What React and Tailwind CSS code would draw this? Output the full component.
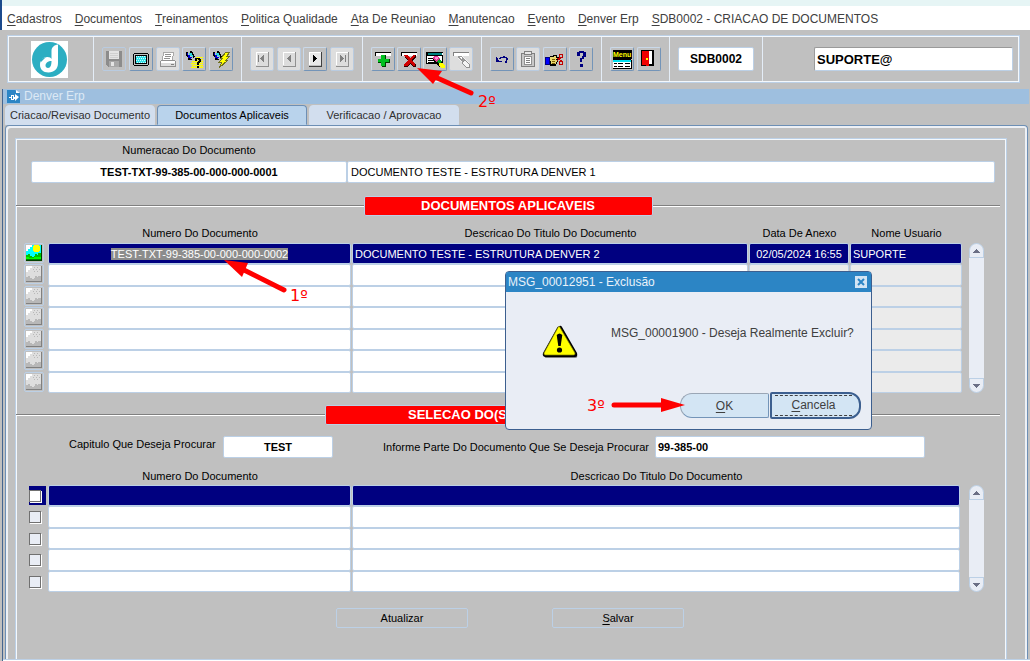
import { useEffect, useRef, useState } from "react";
import clsx from "clsx";

const menus = [
  "Cadastros",
  "Documentos",
  "Treinamentos",
  "Politica Qualidade",
  "Ata De Reuniao",
  "Manutencao",
  "Evento",
  "Denver Erp",
  "SDB0002 - CRIACAO DE DOCUMENTOS",
];

const tabs = [
  "Criacao/Revisao Documento",
  "Documentos Aplicaveis",
  "Verificacao / Aprovacao",
];

const documents = [
  {
    number: "TEST-TXT-99-385-00-000-000-0002",
    title: "DOCUMENTO TESTE - ESTRUTURA DENVER 2",
    date: "02/05/2024 16:55",
    user: "SUPORTE",
  },
  {},
  {},
  {},
  {},
  {},
  {},
];

const searchRows = [1, 2, 3, 4, 5];

function Svg({ children, size = 22 }) {
  return (
    <svg
      width={size}
      height={size}
      viewBox={`0 0 ${size} ${size}`}
      shapeRendering="crispEdges"
      className="shrink-0"
      aria-hidden="true">
      {children}
    </svg>
  );
}

function SaveIcon() {
  return (
    <Svg>
      <path d="M3 3h16v16H5l-2-2z" fill="#8c8c8c" />
      <path d="M6 3h10v8H6z" fill="#e4e4e4" />
      <path d="M7 5h8M7 7h8M7 9h8" stroke="#d0d0d0" />
      <path d="M6 13h10v6H6z" fill="#a8a8a8" />
      <path d="M8 14h3v4H8z" fill="#e4e4e4" />
    </Svg>
  );
}

function ScreenIcon() {
  return (
    <Svg>
      <path d="M4 5h14v1h1v11h-1v1H4v-1H3V6h1z" fill="#000" />
      <path d="M4 6h14v11H4z" fill="#c0c0c0" />
      <path d="M5 7h12v9H5z" fill="#000" />
      <path d="M6 8h10v7H6z" fill="#30e0e8" />
      <path
        d="M6 8.500h10M7 10.500h9M6 12.500h10M7 14.500h9"
        stroke="#d0ffff"
        strokeDasharray="1 1"
      />
    </Svg>
  );
}

function PrintIcon() {
  return (
    <Svg>
      <path d="M7 4h10l-2 8H5z" fill="#fff" stroke="#a8a8a8" />
      <path d="M8 6.500h6M8 8.500h6M7 10.500h6" stroke="#909090" />
      <path d="M4 12h14l1 2v5H3v-5z" fill="#909090" />
      <path d="M4 13h14v2H4z" fill="#fff" />
      <path d="M4 15h14v3H4z" fill="#dcdcdc" />
      <path d="M14 16h3v1h-3z" fill="#808080" />
    </Svg>
  );
}

// the small torch shared by the query buttons
function Torch() {
  return (
    <>
      <path d="M3 5h2v2h2v2h2v1H8v1H6v-1H5V8H4V7H3z" fill="#0000d0" />
      <path d="M6 5h4v2h1v2H9V8H7V7H6z" fill="#30d8e0" />
      <path d="M3 4h2v1H4v2h1v2H4V8H3zM5 10h2v1h2v1H5z" fill="#000" />
      <path d="M7 3h2v1h1v2h1v2h1v1h-1v1h-1V7H9V5H7z" fill="#000" />
    </>
  );
}

function QueryIcon() {
  return (
    <Svg>
      <path
        d="M13 9.500h7M12 11.500h8M9 13.500h11M8 15.500h12M9 17.500h11M8 19.500h12"
        stroke="#ffff00"
        strokeWidth="1"
      />
      <path
        d="M9 14.500h11M8 16.500h12M9 18.500h11M13 12.500h7"
        stroke="#e8e860"
        strokeDasharray="1 1"
      />
      <Torch />
      <path
        d="M12 10h5v1h1v3h-1v1h-1v2h-2v-3h1v-1h1v-1h-1v-1h-1v2h-2v-2h-1zM14 18h2v2h-2z"
        fill="#000"
      />
    </Svg>
  );
}

function ExecuteIcon() {
  return (
    <Svg>
      <Torch />
      <path
        d="M16 4h4l-3 4h3l-4 4h2l-9 8 3-6h-3l4-4h-2z"
        fill="#ffff00"
        stroke="#707020"
      />
    </Svg>
  );
}

function StepIcon({ dir, bar, dark }) {
  const color = dark ? "#000" : "#808080";
  return (
    <Svg>
      <path d="M5 4h12v13H5z" fill={dark ? "#e8e8e8" : "#dcdcdc"} />
      <path d="M17 4v14H5" fill="none" stroke={dark ? "#404040" : "#909090"} />
      <path d="M5.500 17V4.500H17" fill="none" stroke="#fff" />
      <g transform={dir === "left" ? "translate(22 0) scale(-1 1)" : undefined}>
        <path
          d="M9 7h1v1h1v1h1v1h1v1h-1v1h-1v1h-1v1H9z"
          fill={color}
        />
        {bar && <path d="M14 7h1v7h-1z" fill={color} />}
      </g>
    </Svg>
  );
}

function Bar({ muted }) {
  return (
    <>
      <path d="M3 4h16v4H3z" fill={muted ? "#808080" : "#000"} />
      <path d="M4 5h15v3H4z" fill="#fff" />
    </>
  );
}

function InsertIcon() {
  return (
    <Svg>
      <Bar />
      <path d="M10 7h4v4h4v4h-4v4h-4v-4H6v-4h4z" fill="#004000" />
      <path d="M9 7h4v4h4v3h-4v4H9v-4H6v-3h3z" fill="#00c020" />
    </Svg>
  );
}

function RemoveIcon() {
  return (
    <Svg>
      <Bar />
      <path
        d="M7 7h3l2 3 3-3h3v2l-4 4 4 4v2h-3l-3-3-3 3H6v-2l4-4-3-3z"
        fill="#300000"
      />
      <path
        d="M6 7h3l3 3 3-3h2v1l-4 4 4 4v2h-2l-3-3-3 3H6v-1l4-5-4-4z"
        fill="#d00000"
      />
    </Svg>
  );
}

function ClearIcon() {
  return (
    <Svg>
      <path d="M2 4h17v12H2z" fill="#000" />
      <path d="M4 5h15v2H4zM3 8h15v7H3z" fill="#fff" />
      <path d="M4 5h14v2H4z" fill="#008080" />
      <path d="M4 10.500h6M4 12.500h6M4 14.500h8" stroke="#000" />
      <path d="M9 9h4l6 6v4h-3l-7-6z" fill="#000" />
      <path d="M10 8h3l3 3-3 4-4-4z" fill="#e03090" />
      <path d="M11 9h2l1 1-2 2-1-1z" fill="#ff90d0" />
      <path d="M14 12l2-1 2 3-3 2-2-2z" fill="#00a020" />
      <path d="M15 15h3l3 3v2h-3l-3-2z" fill="#ffff00" />
    </Svg>
  );
}

function EraseIcon() {
  return (
    <Svg>
      <Bar muted />
      <path d="M8 8h4l7 7v4h-3l-8-8z" fill="#f4f4f4" />
      <path d="M8 8h3l4 4-3 2-4-4z" fill="#989898" />
      <path d="M9 9h2l1 1-1 1z" fill="#fff" />
      <path d="M12 15l3-3 4 4v3h-3z" fill="none" stroke="#909090" />
    </Svg>
  );
}

function UndoIcon() {
  return (
    <Svg>
      <path
        d="M8 11c2-2 7-3 8 0 0 2 0 3-2 4"
        fill="none"
        stroke="#000080"
        strokeWidth="1.500"
      />
      <path d="M5 9h1v1h1v2h1v1h3v1H5z" fill="#000080" />
    </Svg>
  );
}

function ClipboardIcon() {
  return (
    <Svg>
      <path d="M4.500 5.500h13v13h-13z" fill="#c8c8c8" stroke="#808080" />
      <path d="M7.500 3.500h7v3h-7z" fill="#e8e8e8" stroke="#808080" />
      <path d="M7.500 8.500h7v8h-7z" fill="#fff" stroke="#909090" />
      <path d="M9 10.500h4M9 12.500h4M9 14.500h4" stroke="#808080" />
    </Svg>
  );
}

function CutHandIcon() {
  return (
    <Svg>
      <path d="M1 9h5v8H1z" fill="#000080" />
      <path d="M2 10h3v6H2z" fill="#0000ff" />
      <path d="M5 8h4V7h4v2h3v3h-2v2h-1v2h-1v2H6V8z" fill="#000" />
      <path d="M6 9h4V8h2v2h3v1h-3v1h1v2h-1v2H7z" fill="#e8d870" />
      <path d="M8 11.500h3M8 13.500h3M8 15.500h3" stroke="#806000" />
      <path d="M13 10l5 3M13 13l5-4" stroke="#c00000" />
      <path
        d="M15 6h3v3h-3zM15 13h3v3h-3z"
        fill="none"
        stroke="#c00000"
      />
    </Svg>
  );
}

function HelpIcon() {
  return (
    <Svg>
      <path
        d="M7 4h2V3h5v1h2v5h-2v2h-2v3h-2v-4h2V8h1V5h-3v3H7zM10 16h3v3h-3z"
        fill="#000080"
      />
    </Svg>
  );
}

function MenuIcon() {
  return (
    <Svg>
      <path d="M2 2h19v9H2z" fill="#000" />
      <text
        x="2"
        y="9"
        fontSize="7"
        fontWeight="bold"
        fontFamily="Liberation Sans, sans-serif"
        fill="#ffff00">
        Menu
      </text>
      <path d="M2 12h18v2H2z" fill="#00e0f0" />
      <path d="M2 14h18v6H2z" fill="#fff" />
      <path
        d="M3 15.500h3M7 15.500h5M14 15.500h5M3 18.500h3M7 18.500h5M14 18.500h5"
        stroke="#000"
      />
      <path d="M2 20h19v1H2zM2 11h18v1H2zM20 12h1v8h-1z" fill="#000" />
    </Svg>
  );
}

function ExitIcon() {
  return (
    <Svg>
      <path d="M3 2h13v16H3z" fill="#000" />
      <path d="M11 3h3v13h-3z" fill="#fff" />
      <path d="M4 3h7v15H9l-2-1H4z" fill="#f00000" />
      <path d="M8 10h2v2H8z" fill="#ffff00" />
    </Svg>
  );
}

function PictureIcon({ active }) {
  return (
    <Svg size={16}>
      <path d="M0 0h16v16H0z" fill={active ? "#004000" : "#808080"} />
      <path d="M0 0h15v15H0z" fill={active ? "#00ffff" : "#dedede"} />
      <path d="M0 0h6v2H4v2H2v2H0z" fill="#fff" />
      {active ? (
        <>
          <path d="M8 0h5v1h1v5h-1v1H8V6H7V1h1z" fill="#ffff00" />
          <path d="M0 10h2v-1h2v2h2v1h2v-1h1v-2h2v1h1v-2h3v7H0z" fill="#00c000" />
          <path d="M0 12h3v1h5v-1h7v2H0z" fill="#00ff00" />
          <path d="M0 14h15v1H0z" fill="#008000" />
        </>
      ) : (
        <>
          <path
            d="M8 1.500h6M7 3.500h7M8 5.500h6"
            stroke="#b8b8b8"
            strokeDasharray="1 2"
          />
          <path d="M0 11h2v-1h2v2h2v1h2v-1h1v-2h2v1h1v-1h3v5H0z" fill="#b8b8b8" />
        </>
      )}
    </Svg>
  );
}

function WarningIcon() {
  return (
    <svg
      width="38"
      height="36"
      viewBox="0 0 38 36"
      className="shrink-0"
      aria-hidden="true">
      <path d="M20 3L36 31q1 3-2 3H6q-3 0-2-2z" fill="#808080" />
      <path
        d="M18.500 2q1.500-1 2.500 1l15 26q1 4-2 4H4q-3-1-2-4L16.500 3z"
        fill="#000"
      />
      <path
        d="M17 3.500q1-2 2 0L34 29q.5 2-1.500 2h-28q-2 0-1.500-2z"
        fill="#ffff00"
        stroke="#808000"
        strokeWidth="0.700"
      />
      <path d="M15.700 11q2.800-3 5.600 0l-1.600 11h-2.400z" fill="#000" />
      <circle cx="18.500" cy="26" r="2.600" fill="#000" />
    </svg>
  );
}

function Logo() {
  return (
    <svg width="37" height="37" viewBox="0 0 37 37" role="img" aria-label="Denver">
      <path d="M0 0h37v37H0z" fill="#fff" />
      <circle cx="18.500" cy="18.500" r="17.500" fill="#2caec2" />
      <path
        d="M27 3.500V22c0 6-4 9.500-9.500 9.500C12 31.500 9 28 9 24c0-4.500 3-8 7.500-8 2 0 3.500.7 4 2V10c0-3.500 2.500-6 6.500-6.500z"
        fill="#fff"
      />
      <path
        d="M20.500 20c-3.500 0-6 2-6 4.500 0 1.500 1 2.500 2.500 2.500 2.500 0 3.500-3 3.500-7z"
        fill="#2caec2"
      />
      <path d="M9 18.500l6-2.500-5 5z" fill="#2caec2" />
    </svg>
  );
}

const toolGroups = [
  {
    width: "w-[148px]",
    tools: [
      { name: "Salvar registro", icon: <SaveIcon />, off: true },
      { name: "Tela", icon: <ScreenIcon /> },
      { name: "Imprimir", icon: <PrintIcon />, off: true, light: true },
      { name: "Entrar consulta", icon: <QueryIcon /> },
      { name: "Executar consulta", icon: <ExecuteIcon /> },
    ],
  },
  {
    width: "w-[121px]",
    tools: [
      { name: "Primeiro", icon: <StepIcon dir="left" bar />, off: true, light: true },
      { name: "Anterior", icon: <StepIcon dir="left" />, off: true, light: true },
      { name: "Proximo", icon: <StepIcon dir="right" dark /> },
      { name: "Ultimo", icon: <StepIcon dir="right" bar />, off: true, light: true },
    ],
  },
  {
    width: "w-[119px]",
    tools: [
      { name: "Inserir", icon: <InsertIcon /> },
      { name: "Excluir", icon: <RemoveIcon /> },
      { name: "Limpar", icon: <ClearIcon /> },
      { name: "Apagar", icon: <EraseIcon />, off: true, light: true },
    ],
  },
  {
    width: "w-[120px]",
    tools: [
      { name: "Desfazer", icon: <UndoIcon /> },
      { name: "Colar", icon: <ClipboardIcon />, off: true, light: true },
      { name: "Recortar", icon: <CutHandIcon /> },
      { name: "Ajuda", icon: <HelpIcon /> },
    ],
  },
  {
    width: "w-[68px]",
    tools: [
      { name: "Menu", icon: <MenuIcon /> },
      { name: "Sair", icon: <ExitIcon /> },
    ],
  },
];

function ToolButton({ tool }) {
  return (
    <button
      type="button"
      aria-label={tool.name}
      disabled={tool.off}
      className={clsx(
        "flex size-6 items-center justify-center rounded-xs border",
        tool.off
          ? "border-[#b9cbe0]"
          : "border-[#c9d9ea] border-r-[#7394b8] border-b-[#7394b8]",
        tool.light && "bg-[#dedede]"
      )}>
      {tool.icon}
    </button>
  );
}

function Mnemonic({ text }) {
  return (
    <>
      <span className="underline underline-offset-2">{text[0]}</span>
      {text.slice(1)}
    </>
  );
}

function Toolbar() {
  return (
    <div className="mt-[5px] mr-[10px] ml-[7px] border border-[#bcd0e6] p-px outline -outline-offset-2 outline-[#f4f8fc]">
      <div className="flex h-11 divide-x divide-[#e4edf7]">
        <div className="flex w-[85px] shrink-0 items-center pl-[22px]">
          <Logo />
        </div>
        {toolGroups.map((group, index) => (
          <div
            key={index}
            className={clsx(
              "flex shrink-0 items-center justify-between px-2",
              group.width
            )}>
            {group.tools.map((tool) => (
              <ToolButton key={tool.name} tool={tool} />
            ))}
          </div>
        ))}
        <div className="flex w-[93px] shrink-0 items-center px-2">
          <input
            aria-label="Programa"
            className="h-6 w-full rounded-xs border border-[#bcd0e6] bg-white text-center text-xs font-bold outline-none"
            defaultValue="SDB0002"
          />
        </div>
        <div className="flex flex-1 items-center pr-[5px] pl-[51px]">
          <input
            aria-label="Usuario"
            className="h-6 w-full rounded-xs border border-[#bcd0e6] border-t-[#9a9a9a] border-l-[#9a9a9a] bg-white px-[2px] text-[13px] font-bold outline-none"
            defaultValue="SUPORTE@"
          />
        </div>
      </div>
    </div>
  );
}

function SectionTitle({ children, className }) {
  return (
    <div className="flex h-5 items-center pr-[6px]">
      <div className="h-[2px] flex-1 border-t border-[#808080] bg-white" />
      <h2
        className={clsx(
          "h-5 rounded-xs border border-[#bcd0e6] bg-[#ff0000] text-[13px] leading-[18px] font-bold text-white",
          className
        )}>
        {children}
      </h2>
      <div className="h-[2px] flex-1 border-t border-[#808080] bg-white" />
    </div>
  );
}

function ScrollBar() {
  return (
    <div className="flex w-[15px] flex-col">
      <button
        type="button"
        aria-label="Rolar para cima"
        className="flex h-[15px] items-center justify-center rounded-t-full border border-[#bcd0e6] bg-[#e9edf5]">
        <svg width="7" height="4" viewBox="0 0 7 4" shapeRendering="crispEdges">
          <path d="M3 0h1v1h1v1h1v1h1v1H0V3h1V2h1V1h1z" fill="#6b6f85" />
        </svg>
      </button>
      <div className="flex-1 bg-[#e9edf5]" />
      <button
        type="button"
        aria-label="Rolar para baixo"
        className="flex h-[15px] items-center justify-center rounded-b-full border border-[#bcd0e6] bg-[#e9edf5]">
        <svg width="7" height="4" viewBox="0 0 7 4" shapeRendering="crispEdges">
          <path d="M0 0h7v1H6v1H5v1H4v1H3V3H2V2H1V1H0z" fill="#6b6f85" />
        </svg>
      </button>
    </div>
  );
}

function Cell({ label, value = "", active, center, muted, inputRef }) {
  return (
    <td className="h-[21px] pr-px group-even:h-[22px]">
      <input
        ref={inputRef}
        aria-label={label}
        defaultValue={value}
        className={clsx(
          "block h-full w-full rounded-xs border border-[#bcd0e6] px-[2px] outline-none selection:bg-[#8c8c8c] selection:text-white",
          active ? "bg-[#000080] text-white" : muted ? "bg-[#ebebeb]" : "bg-white",
          center && "text-center"
        )}
      />
    </td>
  );
}

function DocumentsTable() {
  const firstRef = useRef(null);

  useEffect(() => {
    firstRef.current.focus();
    firstRef.current.select();
  }, []);

  return (
    <div className="mt-[7px] flex gap-[6px] pr-[22px] pl-2">
      <table className="w-full flex-1 table-fixed border-separate border-spacing-0">
        <colgroup>
          <col className="w-6" />
          <col className="w-[304px]" />
          <col />
          <col className="w-[101px]" />
          <col className="w-[113px]" />
        </colgroup>
        <thead>
          <tr className="h-[19px] [&>th]:p-0 [&>th]:font-normal">
            <th aria-label="Anexo" />
            <th>Numero Do Documento</th>
            <th>Descricao Do Titulo Do Documento</th>
            <th>Data De Anexo</th>
            <th>Nome Usuario</th>
          </tr>
        </thead>
        <tbody>
          {documents.map((doc, index) => (
            <tr key={index} className="group">
              <td className="p-0 align-top">
                <button
                  type="button"
                  aria-label={`Abrir anexo ${index + 1}`}
                  className="flex h-5 w-[20px] items-center justify-center rounded-xs border border-[#bcd0e6]">
                  <PictureIcon active={index === 0} />
                </button>
              </td>
              <Cell
                label="Numero Do Documento"
                value={doc.number}
                active={index === 0}
                inputRef={index === 0 ? firstRef : undefined}
                center
              />
              <Cell
                label="Descricao Do Titulo Do Documento"
                value={doc.title}
                active={index === 0}
              />
              <Cell
                label="Data De Anexo"
                value={doc.date}
                active={index === 0}
                center
                muted
              />
              <Cell
                label="Nome Usuario"
                value={doc.user}
                active={index === 0}
                muted
              />
            </tr>
          ))}
        </tbody>
      </table>
      <div className="flex pt-[19px]">
        <ScrollBar />
      </div>
    </div>
  );
}

function SearchTable() {
  return (
    <div className="mt-[10px] flex gap-2 pr-[22px] pl-2">
      <table className="w-full flex-1 table-fixed border-separate border-spacing-0">
        <colgroup>
          <col className="w-6" />
          <col className="w-[304px]" />
          <col />
        </colgroup>
        <thead>
          <tr className="h-[17px] [&>th]:p-0 [&>th]:font-normal">
            <th aria-label="Selecionar" />
            <th>Numero Do Documento</th>
            <th>Descricao Do Titulo Do Documento</th>
          </tr>
        </thead>
        <tbody>
          {searchRows.map((row) => (
            <tr key={row} className="group">
              <td className="pl-[5px]">
                <div
                  className={clsx(
                    "flex h-[19px] w-[17px] items-center",
                    row === 1 && "bg-[#000080]"
                  )}>
                  <input
                    type="checkbox"
                    aria-label={`Selecionar linha ${row}`}
                    className={clsx(
                      "size-3 appearance-none border border-[#707070] shadow-[1px_1px_0_#fff] checked:bg-[#2c85c5]",
                      row === 1 ? "bg-white" : "bg-[#e9edf5]"
                    )}
                  />
                </div>
              </td>
              <Cell label="Numero Do Documento" active={row === 1} center />
              <Cell
                label="Descricao Do Titulo Do Documento"
                active={row === 1}
              />
            </tr>
          ))}
        </tbody>
      </table>
      <div className="flex pt-[17px]">
        <ScrollBar />
      </div>
    </div>
  );
}

function ConfirmDialog({ onClose }) {
  return (
    <div
      role="dialog"
      aria-labelledby="dialog-title"
      className="absolute top-[271px] left-[505px] w-[367px] rounded-sm border border-[#3c5f8f] bg-[#e9edf5] text-xs text-[#404040]">
      <div className="flex h-5 items-center justify-between rounded-t-xs bg-[#2c85c5] pr-1 pl-[2px]">
        <h3 id="dialog-title" className="text-[#e9f2fa]">
          MSG_00012951 - Exclusão
        </h3>
        <button
          type="button"
          aria-label="Fechar"
          onClick={onClose}
          className="flex size-3 items-center justify-center bg-[#d3e5f4]">
          <svg width="8" height="8" viewBox="0 0 8 8">
            <path d="M1 1l6 6M7 1L1 7" stroke="#2c85c5" strokeWidth="2" />
          </svg>
        </button>
      </div>
      <div className="flex items-start gap-8 pt-8 pl-[35px]">
        <WarningIcon />
        <p className="pt-px whitespace-nowrap">
          MSG_00001900 - Deseja Realmente Excluir?
        </p>
      </div>
      <div className="flex items-center justify-end gap-px pt-8 pr-[10px] pb-[10px]">
        <button
          type="button"
          onClick={onClose}
          className="h-[25px] w-[89px] rounded-l-xl rounded-r-xs border border-[#9aa6b5] border-r-[#7394b8] border-b-[#7394b8] bg-[#d3e5f4]">
          <Mnemonic text="OK" />
        </button>
        <button
          type="button"
          onClick={onClose}
          className="h-[27px] w-[91px] rounded-l-xs rounded-r-xl border-2 border-[#3c5f8f] bg-[#d3e5f4] py-px pr-[7px] pl-[3px]">
          <span className="block h-full border-y border-dashed border-[#404040] leading-[19px]">
            <Mnemonic text="Cancela" />
          </span>
        </button>
      </div>
    </div>
  );
}

// numbered step drawn over the screen
function Step({ className, width, height, line, head }) {
  return (
    <svg
      className={clsx("pointer-events-none absolute", className)}
      width={width}
      height={height}
      aria-hidden="true">
      <path d={line} stroke="#ff0000" strokeWidth="5" strokeLinecap="round" />
      <path d={head} fill="#ff0000" />
    </svg>
  );
}

function StepNumber({ className, children }) {
  return (
    <span
      className={clsx(
        "pointer-events-none absolute font-['DejaVu_Sans',sans-serif] text-base leading-4 text-[#ff0000]",
        className
      )}>
      {children}
    </span>
  );
}

export default function App() {
  const [tab, setTab] = useState(1);
  const [open, setOpen] = useState(true);

  return (
    <div className="relative flex min-h-screen flex-col overflow-hidden bg-[#c0c0c0] font-['Liberation_Sans',Arial,sans-serif] text-[11px] text-black">
      <header className="border-l-2 border-[#1c4a8c] bg-white">
        <div className="h-[6px] bg-[#e6f5f5]" />
        <nav className="flex h-6 items-center gap-[13px] pt-px pl-[5px] text-xs whitespace-nowrap text-[#404040]">
          {menus.map((menu) => (
            <button key={menu} type="button">
              <Mnemonic text={menu} />
            </button>
          ))}
        </nav>
      </header>

      <Toolbar />

      <main className="mt-[6px] ml-[2px] flex flex-1 flex-col border-l border-[#45658f]">
        <div className="mr-px flex h-[15px] items-center gap-1 bg-[#9ebfdf] pl-1">
          <svg width="13" height="13" viewBox="0 0 13 13" aria-hidden="true">
            <path d="M0 0h8l5 3v10H0z" fill="#2c85c5" />
            <path d="M9 0l4 3H9z" fill="#fff" />
            <path d="M2 7h2V5h3v2h1V4l4 3-4 4V9H7v1H4V8H2z" fill="#fff" />
            <path d="M5 6h1v3H5z" fill="#2c85c5" />
          </svg>
          <h1 className="text-xs leading-[15px] text-[#dce9f5]">Denver Erp</h1>
        </div>

        <div className="mr-[2px] ml-[2px] flex h-[21px] gap-[2px] pt-px">
          {tabs.map((name, index) => (
            <button
              key={name}
              type="button"
              onClick={() => setTab(index)}
              className={clsx(
                "w-[150px] rounded-t border whitespace-nowrap",
                tab === index
                  ? "border-[#6d8fb5] border-b-[#b9d3ec] bg-[#b9d3ec]"
                  : "border-[#d2deee] bg-[#d2deee] text-[#303030]"
              )}>
              {name}
            </button>
          ))}
        </div>

        <div className="mr-[2px] ml-[2px] flex flex-1 flex-col rounded-t-sm border border-b-0 border-[#6d8fb5] pt-3 pr-5 pl-[9px] shadow-[inset_2px_2px_0_#edf0f5,inset_-2px_0_0_#edf0f5]">
          <div className="flex-1 border border-b-0 border-[#bcd0e6] shadow-[inset_1px_1px_0_#f4f8fc,inset_-1px_0_0_#f4f8fc]">
            <div className="grid grid-cols-[316px_1fr] pt-[3px] pr-[11px] pl-[15px]">
              <label htmlFor="numeracao" className="text-center leading-4">
                Numeracao Do Documento
              </label>
              <span />
              <input
                id="numeracao"
                defaultValue="TEST-TXT-99-385-00-000-000-0001"
                className="mt-[3px] h-[22px] rounded-xs border border-[#bcd0e6] bg-white text-center font-bold outline-none"
              />
              <input
                aria-label="Titulo do documento"
                defaultValue="DOCUMENTO TESTE - ESTRUTURA DENVER 1"
                className="mt-[3px] h-[22px] rounded-xs border border-[#bcd0e6] bg-white px-[3px] outline-none"
              />
            </div>

            <div className="mt-[13px]">
              <SectionTitle className="w-[289px] text-center">
                DOCUMENTOS APLICAVEIS
              </SectionTitle>
            </div>
            <div className="pt-px">
              <DocumentsTable />
            </div>

            <div className="mt-3">
              <SectionTitle className="w-[366px] pl-[82px]">
                SELECAO DO(S)
              </SectionTitle>
            </div>
            <div className="mt-[11px] flex items-center pr-[81px] pl-[53px]">
              <label htmlFor="capitulo" className="w-[154px] self-start leading-4">
                Capitulo Que Deseja Procurar
              </label>
              <input
                id="capitulo"
                defaultValue="TEST"
                className="h-[22px] w-[110px] rounded-xs border border-[#bcd0e6] bg-white text-center font-bold outline-none"
              />
              <label
                htmlFor="parte"
                className="ml-[50px] w-[272px] whitespace-nowrap">
                Informe Parte Do Documento Que Se Deseja Procurar
              </label>
              <input
                id="parte"
                defaultValue="99-385-00"
                className="h-[22px] min-w-0 flex-1 rounded-xs border border-[#bcd0e6] bg-white px-[2px] font-bold outline-none"
              />
            </div>
            <SearchTable />

            <div className="mt-4 flex justify-center gap-[84px] pr-[2px]">
              <button
                type="button"
                className="h-5 w-[132px] rounded-xs border border-[#bcd0e6]">
                Atualizar
              </button>
              <button
                type="button"
                className="h-5 w-[132px] rounded-xs border border-[#bcd0e6]">
                <Mnemonic text="Salvar" />
              </button>
            </div>
          </div>
        </div>
        <div className="h-[2px] border-t border-[#bcd0e6] bg-white" />
      </main>

      {open && <ConfirmDialog onClose={() => setOpen(false)} />}

      <Step
        className="top-[258px] left-[222px]"
        width={68}
        height={38}
        line="M20 11L62 32"
        head="M2 2L26 5L20 19z"
      />
      <StepNumber className="top-[288px] left-[290px]">1º</StepNumber>
      <Step
        className="top-[66px] left-[415px]"
        width={62}
        height={32}
        line="M20 11L56 27"
        head="M2 2L27 5L18 18z"
      />
      <StepNumber className="top-[94px] left-[478px]">2º</StepNumber>
      <Step
        className="top-[396px] left-[610px]"
        width={78}
        height={18}
        line="M4 9L55 9"
        head="M51 2L75 9L51 16z"
      />
      <StepNumber className="top-[398px] left-[587px]">3º</StepNumber>
    </div>
  );
}
